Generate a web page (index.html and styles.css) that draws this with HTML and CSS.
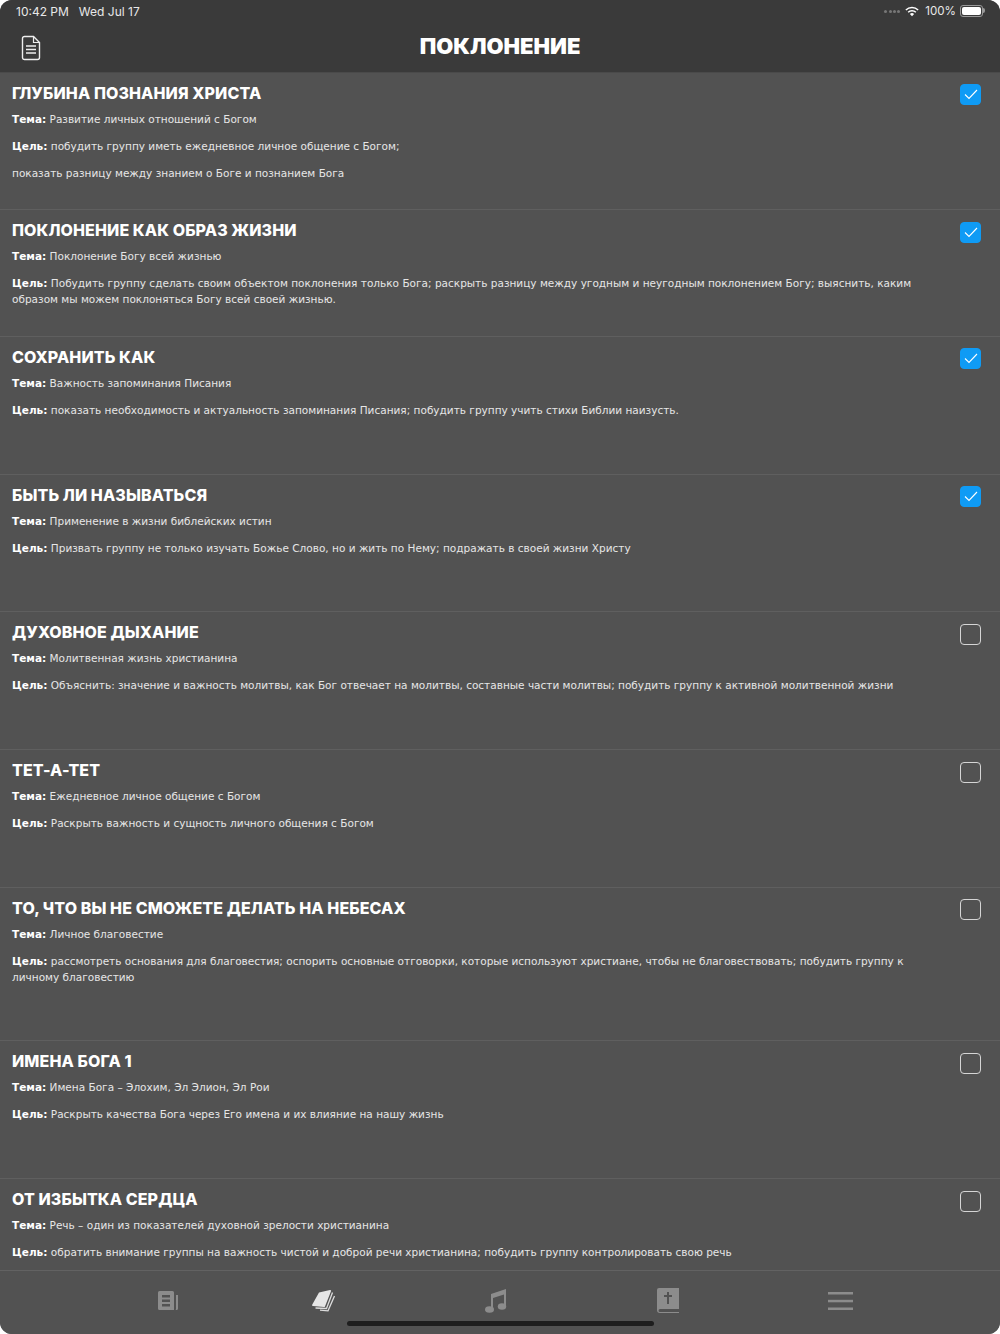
FILE: index.html
```html
<!DOCTYPE html>
<html lang="ru">
<head>
  <meta charset="UTF-8">
  <title>Поклонение</title>
  <link rel="stylesheet" href="styles.css">
</head>
<body>
  <div class="app">
    <header class="top">
      <div class="status">
        <span class="time">10:42 PM</span>
        <span class="date">Wed Jul 17</span>
        <span class="status-right">
          <span class="dots"><i></i><i></i><i></i><i></i></span>
          <svg class="wifi" width="14" height="11" viewBox="0 0 16 12">
            <path d="M8 11.5 5.6 8.9a3.4 3.4 0 0 1 4.8 0z" fill="#fff"/>
            <path d="M3.6 6.9a6.2 6.2 0 0 1 8.8 0" fill="none" stroke="#fff" stroke-width="1.7"/>
            <path d="M1 4.2a9.9 9.9 0 0 1 14 0" fill="none" stroke="#fff" stroke-width="1.7"/>
          </svg>
          <span class="pct">100%</span>
          <span class="battery"><b></b></span>
        </span>
      </div>
      <div class="nav">
        <svg class="doc" width="20" height="26" viewBox="0 0 20 26">
          <path d="M3.5 1.5h9l6 6v15a2 2 0 0 1-2 2h-13a2 2 0 0 1-2-2v-19a2 2 0 0 1 2-2z" fill="none" stroke="#eee" stroke-width="1.4"/>
          <path d="M12.5 1.5v6h6" fill="none" stroke="#eee" stroke-width="1.2"/>
          <path d="M5 11h10M5 14.5h10M5 18h10" stroke="#eee" stroke-width="1.4"/>
        </svg>
        <h1>ПОКЛОНЕНИЕ</h1>
      </div>
    </header>

    <main class="list">
      <section class="row">
        <div class="row-text">
          <h2>ГЛУБИНА ПОЗНАНИЯ ХРИСТА</h2>
          <p><strong>Тема:</strong> Развитие личных отношений с Богом</p>
          <p><strong>Цель:</strong> побудить группу иметь ежедневное личное общение с Богом;</p>
          <p>показать разницу между знанием о Боге и познанием Бога</p>
        </div>
        <span class="check on"><svg width="14" height="11" viewBox="0 0 14 11"><path d="M1 5.5 5 9.5 13 1" fill="none" stroke="#fff" stroke-width="1.1"/></svg></span>
      </section>

      <section class="row">
        <div class="row-text">
          <h2>ПОКЛОНЕНИЕ КАК ОБРАЗ ЖИЗНИ</h2>
          <p><strong>Тема:</strong> Поклонение Богу всей жизнью</p>
          <p><strong>Цель:</strong> Побудить группу сделать своим объектом поклонения только Бога; раскрыть разницу между угодным и неугодным поклонением Богу; выяснить, каким образом мы можем поклоняться Богу всей своей жизнью.</p>
        </div>
        <span class="check on"><svg width="14" height="11" viewBox="0 0 14 11"><path d="M1 5.5 5 9.5 13 1" fill="none" stroke="#fff" stroke-width="1.1"/></svg></span>
      </section>

      <section class="row">
        <div class="row-text">
          <h2>СОХРАНИТЬ КАК</h2>
          <p><strong>Тема:</strong> Важность запоминания Писания</p>
          <p><strong>Цель:</strong> показать необходимость и актуальность запоминания Писания; побудить группу учить стихи Библии наизусть.</p>
          <p>&nbsp;</p>
        </div>
        <span class="check on"><svg width="14" height="11" viewBox="0 0 14 11"><path d="M1 5.5 5 9.5 13 1" fill="none" stroke="#fff" stroke-width="1.1"/></svg></span>
      </section>

      <section class="row">
        <div class="row-text">
          <h2>БЫТЬ ЛИ НАЗЫВАТЬСЯ</h2>
          <p><strong>Тема:</strong> Применение в жизни библейских истин</p>
          <p><strong>Цель:</strong> Призвать группу не только изучать Божье Слово, но и жить по Нему; подражать в своей жизни Христу</p>
          <p>&nbsp;</p>
        </div>
        <span class="check on"><svg width="14" height="11" viewBox="0 0 14 11"><path d="M1 5.5 5 9.5 13 1" fill="none" stroke="#fff" stroke-width="1.1"/></svg></span>
      </section>

      <section class="row">
        <div class="row-text">
          <h2>ДУХОВНОЕ ДЫХАНИЕ</h2>
          <p><strong>Тема:</strong> Молитвенная жизнь христианина</p>
          <p><strong>Цель:</strong> Объяснить: значение и важность молитвы, как Бог отвечает на молитвы, составные части молитвы; побудить группу к активной молитвенной жизни</p>
          <p>&nbsp;</p>
        </div>
        <span class="check"></span>
      </section>

      <section class="row">
        <div class="row-text">
          <h2>ТЕТ-А-ТЕТ</h2>
          <p><strong>Тема:</strong> Ежедневное личное общение с Богом</p>
          <p><strong>Цель:</strong> Раскрыть важность и сущность личного общения с Богом</p>
          <p>&nbsp;</p>
        </div>
        <span class="check"></span>
      </section>

      <section class="row">
        <div class="row-text">
          <h2>ТО, ЧТО ВЫ НЕ СМОЖЕТЕ ДЕЛАТЬ НА НЕБЕСАХ</h2>
          <p><strong>Тема:</strong> Личное благовестие</p>
          <p><strong>Цель:</strong> рассмотреть основания для благовестия; оспорить основные отговорки, которые используют христиане, чтобы не благовествовать; побудить группу к личному благовестию</p>
          <p>&nbsp;</p>
        </div>
        <span class="check"></span>
      </section>

      <section class="row">
        <div class="row-text">
          <h2>ИМЕНА БОГА 1</h2>
          <p><strong>Тема:</strong> Имена Бога – Элохим, Эл Элион, Эл Рои</p>
          <p><strong>Цель:</strong> Раскрыть качества Бога через Его имена и их влияние на нашу жизнь</p>
          <p>&nbsp;</p>
        </div>
        <span class="check"></span>
      </section>

      <section class="row">
        <div class="row-text">
          <h2>ОТ ИЗБЫТКА СЕРДЦА</h2>
          <p><strong>Тема:</strong> Речь – один из показателей духовной зрелости христианина</p>
          <p><strong>Цель:</strong> обратить внимание группы на важность чистой и доброй речи христианина; побудить группу контролировать свою речь</p>
          <p>&nbsp;</p>
        </div>
        <span class="check"></span>
      </section>
    </main>

    <nav class="tabs">
      <span class="tab">
        <svg width="20" height="19" viewBox="0 0 20 19" fill="#8c8c8c">
          <path fill-rule="evenodd" d="M1.500 0h13a1.500 1.500 0 0 1 1.500 1.500V19H1.500A1.500 1.500 0 0 1 0 17.500v-16A1.500 1.500 0 0 1 1.500 0zM4 4v2.500h8V4zm0 4.500V11h8V8.500zM4 13v2.500h8V13z"/>
          <path d="M18 4h2v13.500a1.500 1.500 0 0 1-1.500 1.500H17.500a1 1 0 0 0 .5-1z"/>
        </svg>
      </span>
      <span class="tab">
        <svg width="24" height="24" viewBox="0 0 24 24">
          <path d="M7 3.500 18 1a1 1 0 0 1 1 1.300L13 17.500a1 1 0 0 1-1 .6L1 17a1 1 0 0 1-.7-1.500z" fill="#e6e6e6"/>
          <path d="M20.500 3.500 14.500 19.500 3.500 19" fill="none" stroke="#dcdcdc" stroke-width="1.300"/>
          <path d="M22.500 7 16 21.800 8 21.200" fill="none" stroke="#dcdcdc" stroke-width="1.300"/>
        </svg>
      </span>
      <span class="tab">
        <svg width="22" height="24" viewBox="0 0 22 24" fill="#8c8c8c">
          <path d="M6 5 21 0v17h-2V5.500L8 9v12H6z"/>
          <ellipse cx="4.500" cy="20.500" rx="4.500" ry="3.300"/>
          <ellipse cx="17" cy="17.500" rx="4.200" ry="3.200"/>
        </svg>
      </span>
      <span class="tab">
        <svg width="22" height="25" viewBox="0 0 22 25">
          <path d="M2 0h20v21H3a1.500 1.500 0 0 0 0 3h19v1H3a3 3 0 0 1-3-3V2a2 2 0 0 1 2-2z" fill="#8c8c8c"/>
          <path d="M11 4v12M7 8h8" stroke="#525252" stroke-width="2"/>
        </svg>
      </span>
      <span class="tab">
        <svg width="25" height="18" viewBox="0 0 25 18" fill="#8c8c8c">
          <rect width="25" height="2.500" y="0"/>
          <rect width="25" height="2.500" y="7.800"/>
          <rect width="25" height="2.500" y="15.500"/>
        </svg>
      </span>
    </nav>
    <div class="home-bar"></div>
  </div>
</body>
</html>
```

FILE: styles.css
```css
* {
  box-sizing: border-box;
}

body {
  margin: 0;
  background: #fff;
  font-family: "DejaVu Sans", sans-serif;
}

.app {
  position: relative;
  display: flex;
  flex-direction: column;
  width: 1000px;
  height: 1334px;
  overflow: hidden;
  background: #525252;
  border-radius: 12px;
  color: #fff;
}

.top {
  flex: none;
  height: 72.6px;
  background: #3a3a3a;
  border-bottom: 1px solid #4a4a4a;
}

.status {
  display: flex;
  align-items: center;
  height: 24px;
  padding: 0 14px 2px 16px;
  font-family: Inter, sans-serif;
  font-size: 12px;
  color: #e8e8e8;
}

.date {
  margin-left: 10px;
}

.status-right {
  display: flex;
  align-items: center;
  margin-left: auto;
  gap: 4px;
}

.dots {
  display: flex;
  gap: 1.3px;
}

.dots i {
  width: 3px;
  height: 3px;
  border-radius: 50%;
  background: #777;
}

.wifi {
  margin: 0 2px 0 1px;
}

.pct {
  font-size: 11.6px;
}

.battery {
  position: relative;
  display: block;
  width: 23px;
  height: 12px;
  margin-right: 3px;
  padding: 1px;
  border: 1px solid #999;
  border-radius: 3px;
}

.battery::after {
  content: "";
  position: absolute;
  right: -3px;
  top: 2px;
  width: 2px;
  height: 5px;
  background: #999;
  border-radius: 0 2px 2px 0;
}

.battery b {
  display: block;
  height: 100%;
  background: #fff;
  border-radius: 2px;
}

.nav {
  position: relative;
  display: flex;
  align-items: center;
  justify-content: center;
  height: 44px;
}

.doc {
  position: absolute;
  left: 21px;
  top: 11px;
}

h1 {
  margin: 0;
  font-family: Inter, sans-serif;
  font-size: 22px;
  font-weight: 900;
}

.list {
  flex: 1;
  min-height: 0;
  overflow: hidden;
}

.row {
  display: flex;
  justify-content: space-between;
  padding: 10px 19px 0 12px;
  border-bottom: 1px solid #5f5f5f;
}

.row-text {
  width: 915px;
  padding-bottom: 17.7px;
}

h2 {
  margin: 0;
  font-family: Inter, sans-serif;
  font-size: 16px;
  line-height: 20px;
  font-weight: 800;
  letter-spacing: 0.1px;
}

p {
  margin: 8px 0 11px;
  font-size: 10.52px;
  line-height: 16px;
  color: #e6e6e6;
}

p strong {
  color: #fff;
}

.check {
  display: flex;
  align-items: center;
  justify-content: center;
  flex: none;
  width: 21px;
  height: 21px;
  margin-top: 1.5px;
  border: 1.5px solid #d5d5d5;
  border-radius: 4px;
}

.check.on {
  background: #0f9bf5;
  border-color: #0f9bf5;
}

.tabs {
  flex: none;
  display: grid;
  grid-template-columns: 141px 172px 172px 172px 172px;
  align-items: center;
  justify-items: center;
  height: 64px;
  padding: 0 0 4px 97px;
  background: #525252;
  border-top: 1px solid #626262;
}

.tab {
  display: flex;
}

.home-bar {
  position: absolute;
  left: 347px;
  bottom: 8px;
  width: 307px;
  height: 5px;
  border-radius: 3px;
  background: #1e1e1e;
}
```
